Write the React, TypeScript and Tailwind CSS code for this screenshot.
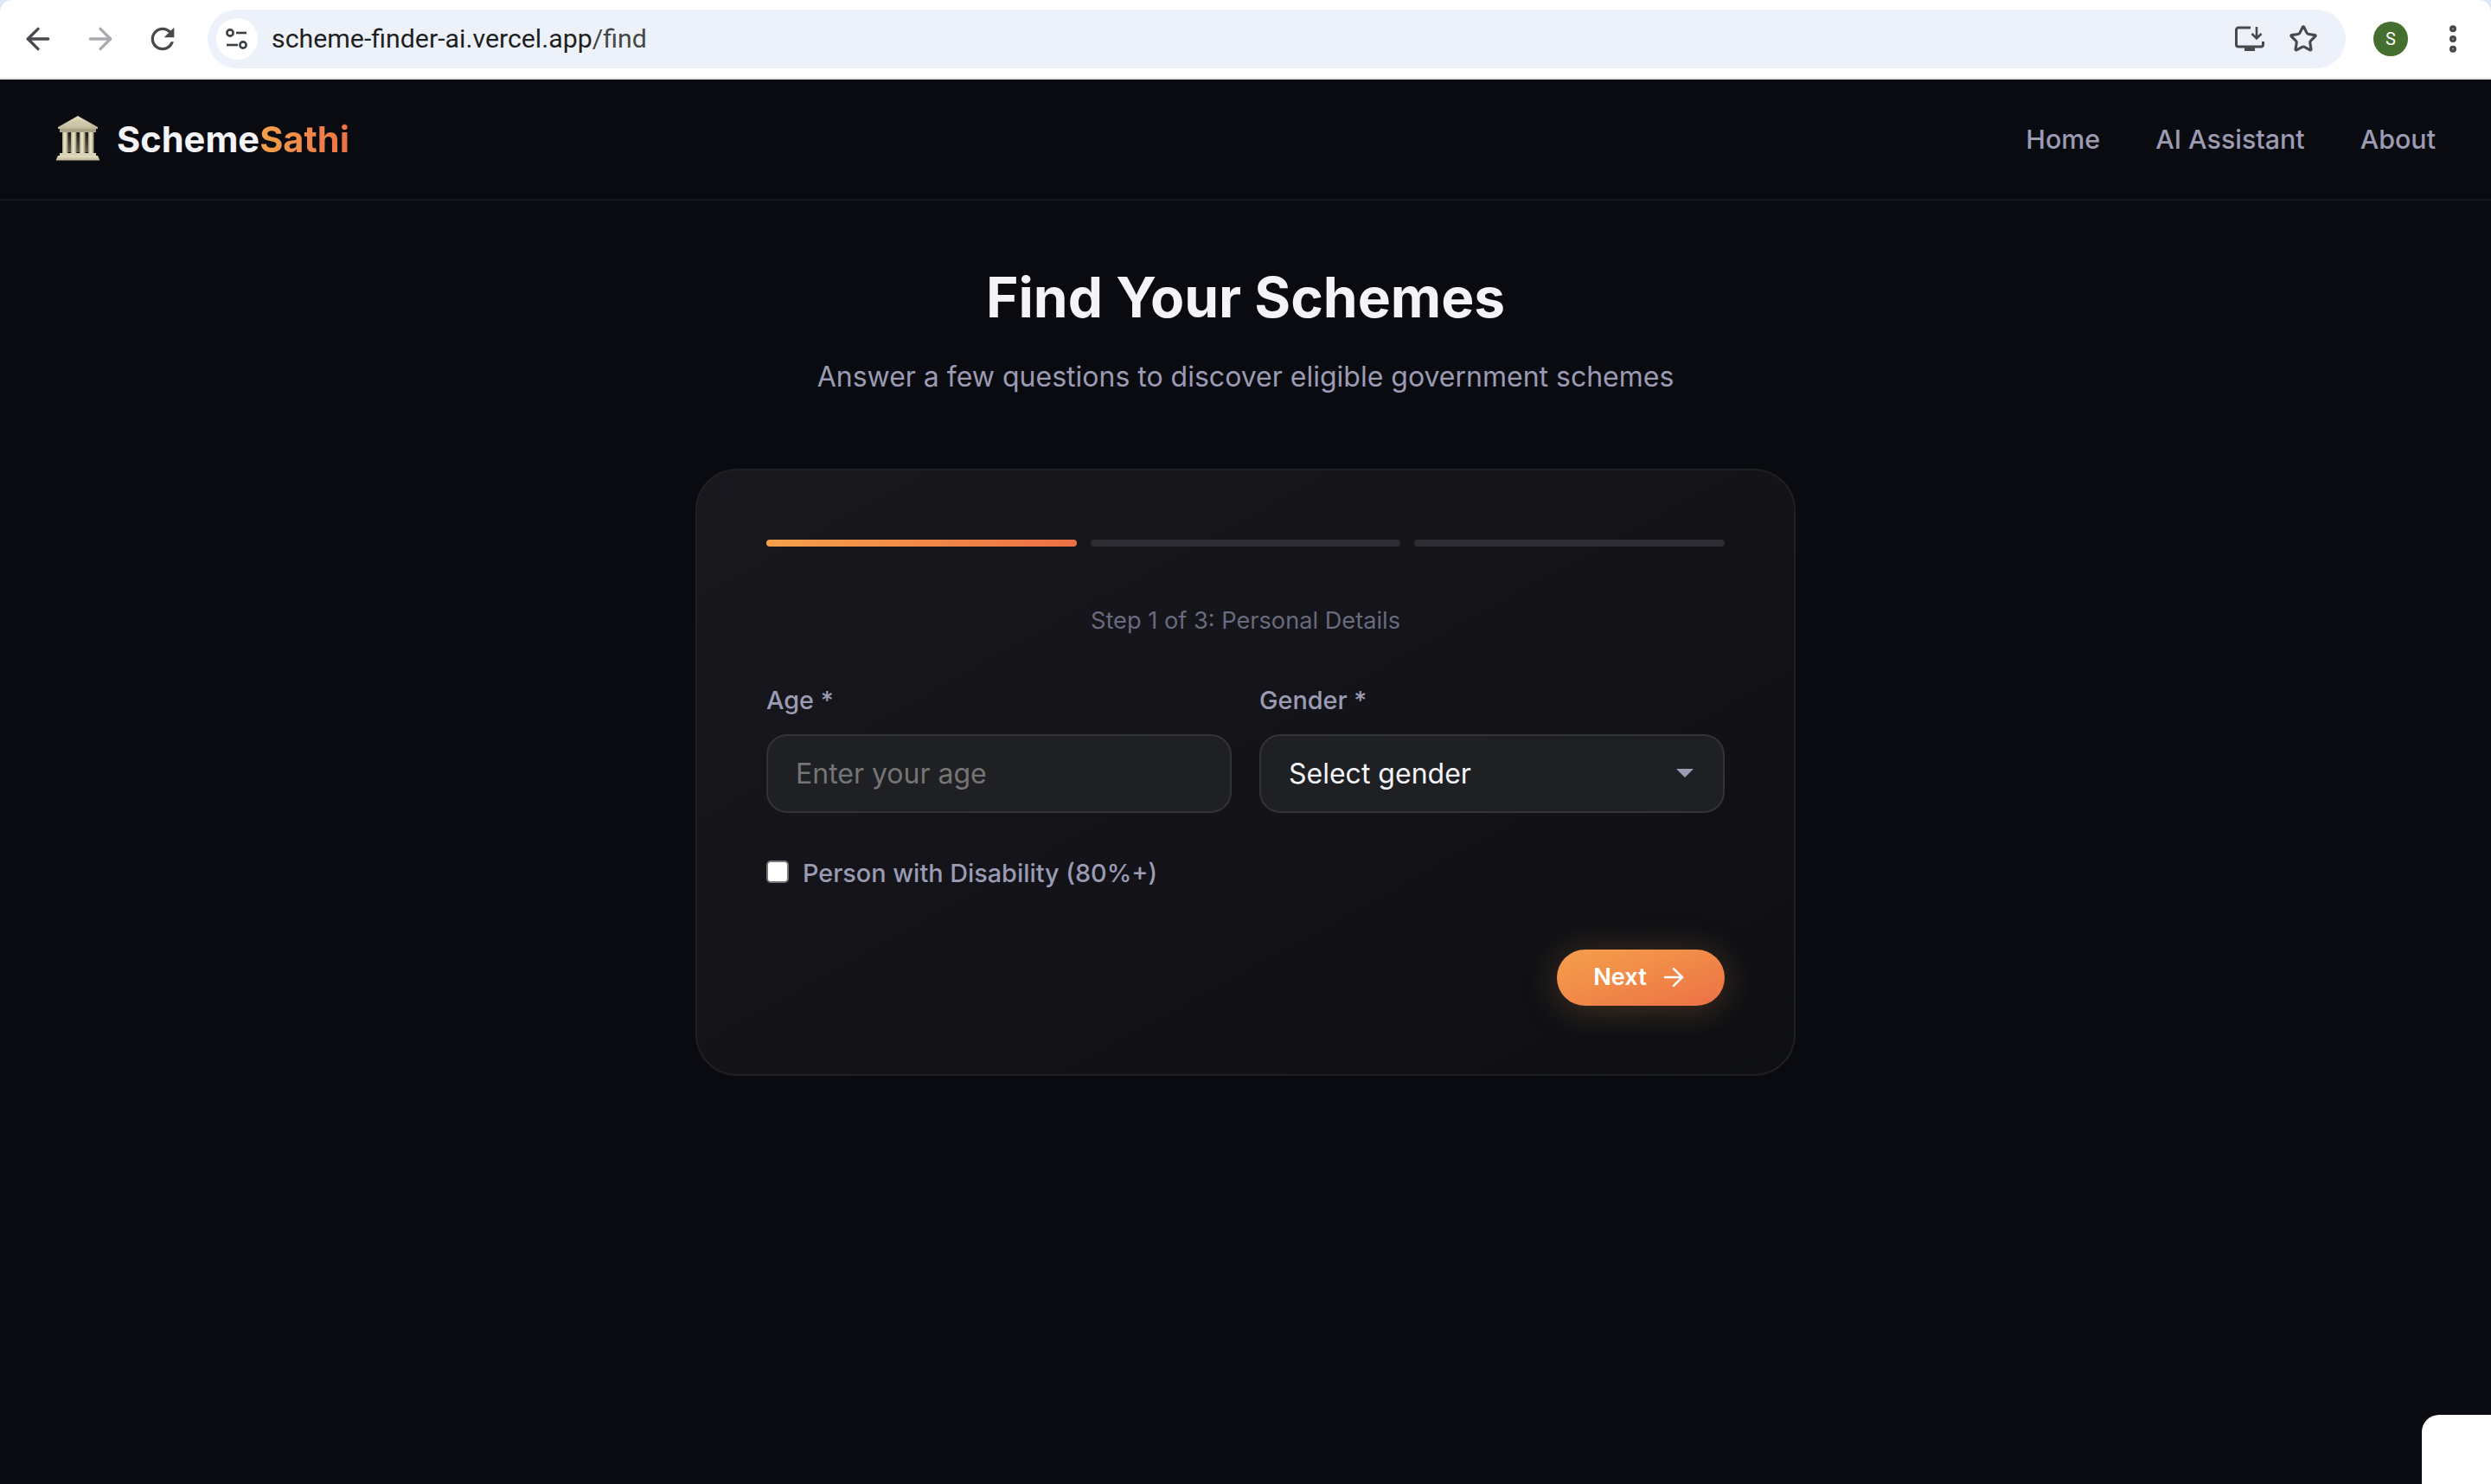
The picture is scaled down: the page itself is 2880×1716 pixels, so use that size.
import React from "react";
import { ArrowLeft, ArrowRight, Star, EllipsisVertical } from "lucide-react";

function TuneIcon() {
  return (
    <svg width="26" height="24" viewBox="0 0 26 24" fill="none" stroke="#3c3f43" strokeWidth="2.6">
      <circle cx="5" cy="5" r="3.6" />
      <path d="M12 5h12" />
      <circle cx="20" cy="19" r="3.6" />
      <path d="M1 19h13" />
    </svg>
  );
}

function ReloadIcon() {
  return (
    <svg width="40" height="40" viewBox="0 0 24 24" fill="#47494d">
      <path d="M17.65 6.35C16.2 4.9 14.21 4 12 4c-4.42 0-7.99 3.58-7.99 8s3.57 8 7.99 8c3.73 0 6.84-2.55 7.73-6h-2.08c-.82 2.33-3.04 4-5.65 4-3.31 0-6-2.69-6-6s2.69-6 6-6c1.66 0 3.14.69 4.22 1.78L13 11h7V4l-2.35 2.35z" />
    </svg>
  );
}

function InstallIcon() {
  return (
    <svg width="34" height="30" viewBox="0 0 34 30" fill="none">
      <path d="M18 2H4a2.5 2.5 0 0 0-2.5 2.5v17A2.5 2.5 0 0 0 4 24h26a2.500 2.500 0 0 0 2.500-2.500V18" stroke="#47494d" strokeWidth="3" />
      <path d="M11 24h12v5H11z" fill="#47494d" />
      <path d="M25 1v13M19.500 9l5.500 5.500L30.500 9" stroke="#47494d" strokeWidth="2.600" />
    </svg>
  );
}

function Temple() {
  return (
    <svg width="52" height="52" viewBox="0 0 52 52" className="mb-[4px]">
      <defs>
        <linearGradient id="stone" x1="0" y1="0" x2="0" y2="1">
          <stop offset="0" stopColor="#e6e0c4" />
          <stop offset="1" stopColor="#bdb595" />
        </linearGradient>
        <linearGradient id="column" x1="0" y1="0" x2="1" y2="0">
          <stop offset="0" stopColor="#a8a184" />
          <stop offset="0.45" stopColor="#f0ebd2" />
          <stop offset="1" stopColor="#9d9678" />
        </linearGradient>
        <linearGradient id="dark" x1="0" y1="0" x2="0" y2="1">
          <stop offset="0" stopColor="#1d1b16" />
          <stop offset="1" stopColor="#66624f" />
        </linearGradient>
      </defs>
      <path d="M26 0 49 13v2H3v-2z" fill="url(#stone)" />
      <path d="M26 4 41 12.500H11z" fill="#cfc8a8" />
      <rect x="5" y="15" width="42" height="4" fill="#a8a184" />
      <rect x="9" y="19" width="34" height="23" fill="url(#dark)" />
      <rect x="8" y="19" width="6.500" height="24" fill="url(#column)" />
      <rect x="18" y="19" width="6.500" height="24" fill="url(#column)" />
      <rect x="28" y="19" width="6.500" height="24" fill="url(#column)" />
      <rect x="38" y="19" width="6.500" height="24" fill="url(#column)" />
      <path d="M5 43h42v3H5z" fill="#d9d3b6" />
      <path d="M3 46h46l2.500 5.500H0.500z" fill="url(#stone)" />
    </svg>
  );
}

export default function App() {
  return (
    <div className="relative flex h-[1716px] w-[2880px] flex-col overflow-hidden bg-[#0a0b10] font-['Inter',sans-serif]">
      {/* browser chrome */}
      <div className="bg-[#dbe6f6]">
        <div className="flex h-[90px] items-center rounded-t-[14px] bg-white pl-[24px] pr-[24px]">
          <div className="flex w-[216px] items-center gap-[32px] text-[#47494d]">
            <ArrowLeft size={40} strokeWidth={2} className="h-[40px] w-[40px]" />
            <ArrowRight size={40} strokeWidth={2} className="text-[#a9abae]" />
            <ReloadIcon />
          </div>
          <div className="flex h-[68px] w-[2472px] items-center rounded-full bg-[#edf2fa] pl-[10px] pr-[32px]">
            <div className="flex h-[48px] w-[48px] items-center justify-center rounded-full bg-white">
              <TuneIcon />
            </div>
            <span className="ml-[16px] font-['Roboto',sans-serif] text-[30.3px] leading-none text-[#1f1f1f]">
              scheme-finder-ai.vercel.app<span className="text-[#474747]">/find</span>
            </span>
            <div className="ml-auto flex items-center gap-[28px]">
              <InstallIcon />
              <Star size={34} strokeWidth={2.200} className="text-[#47494d]" />
            </div>
          </div>
          <div className="ml-[32px] flex h-[40px] w-[40px] items-center justify-center rounded-full bg-[#456f2e] font-['Roboto',sans-serif] text-[20px] text-white">
            S
          </div>
          <EllipsisVertical size={40} strokeWidth={2.800} className="ml-[32px] text-[#47494d]" />
        </div>
      </div>
      <div className="h-[2px] bg-[#e3e3e3]" />

      {/* nav */}
      <nav className="flex h-[140px] items-center justify-between border-b-2 border-[#15161b] pl-[64px] pr-[64px] pt-[2px]">
        <div className="flex items-center gap-[19px]">
          <Temple />
          <span className="text-[41.6px] font-bold leading-none text-[#f4f4f8]">
            Scheme<span className="bg-gradient-to-r from-[#f4a04b] to-[#ec7045] bg-clip-text text-transparent">Sathi</span>
          </span>
        </div>
        <div className="flex items-center gap-[64px] text-[30.4px] font-medium text-[#9b9bb3]">
          <span>Home</span>
          <span>AI Assistant</span>
          <span>About</span>
        </div>
      </nav>

      {/* content */}
      <main className="flex flex-col items-center pt-[74px]">
        <h1 className="text-[64px] font-bold leading-[1.2] text-[#f4f4f8]">Find Your Schemes</h1>
        <p className="mt-[29px] text-[32px] leading-[1.5] text-[#9b9bb3]">
          Answer a few questions to discover eligible government schemes
        </p>

        <section className="mt-[82px] flex h-[702px] w-[1272px] flex-col rounded-[48px] border-2 border-[#1f2025] bg-gradient-to-br from-[#18181e] to-[#0e0f13] px-[80px] pt-[80px]">
          <div className="grid grid-cols-3 gap-[16px]">
            <div className="h-[8px] rounded-full bg-gradient-to-r from-[#f4a04b] to-[#ec7045]" />
            <div className="h-[8px] rounded-full bg-[#2c2c32]" />
            <div className="h-[8px] rounded-full bg-[#2c2c32]" />
          </div>

          <p className="mt-[66px] text-center text-[27.2px] leading-[40px] text-[#6a6a7e]">Step 1 of 3: Personal Details</p>

          <div className="mt-[54px] grid grid-cols-2 gap-[32px]">
            <label className="flex flex-col">
              <span className="text-[28.8px] font-medium leading-[36px] text-[#9b9bb3]">Age *</span>
              <input
                placeholder="Enter your age"
                className="mt-[21px] h-[91px] w-full rounded-[24px] border-2 border-[#323338] bg-[#1f2024] px-[32px] text-[32px] text-[#f4f4f8] outline-none placeholder:text-[#757575]"
              />
            </label>
            <div className="flex flex-col">
              <span className="text-[28.8px] font-medium leading-[36px] text-[#9b9bb3]">Gender *</span>
              <div className="mt-[21px] flex h-[91px] items-center justify-between rounded-[24px] border-2 border-[#323338] bg-[#1f2024] pl-[32px] pr-[34px]">
                <span className="pt-[2px] text-[32px] text-[#f4f4f8]">Select gender</span>
                <svg width="20" height="10" viewBox="0 0 20 10">
                  <path d="M0 0h20L10 10z" fill="#9b9bb3" />
                </svg>
              </div>
            </div>
          </div>

          <label className="mt-[48px] flex items-center gap-[16px]">
            <input type="checkbox" className="mt-[-2px] h-[26px] w-[26px] appearance-none rounded-[5px] border-2 border-[#767676] bg-white" />
            <span className="text-[28.8px] font-medium text-[#9b9bb3]">Person with Disability (80%+)</span>
          </label>

          <div className="mt-[67px] flex justify-end">
            <button className="flex h-[65px] w-[194px] items-center justify-center gap-[14px] rounded-full bg-gradient-to-br from-[#f4a04b] to-[#ec7045] text-[27.2px] font-semibold text-white shadow-[0_4px_40px_rgba(244,160,75,0.25)]">
              Next
              <ArrowRight size={34} strokeWidth={1.800} />
            </button>
          </div>
        </section>
      </main>

      <div className="absolute bottom-0 right-0 h-[80px] w-[80px] rounded-tl-[20px] bg-white" />
    </div>
  );
}
